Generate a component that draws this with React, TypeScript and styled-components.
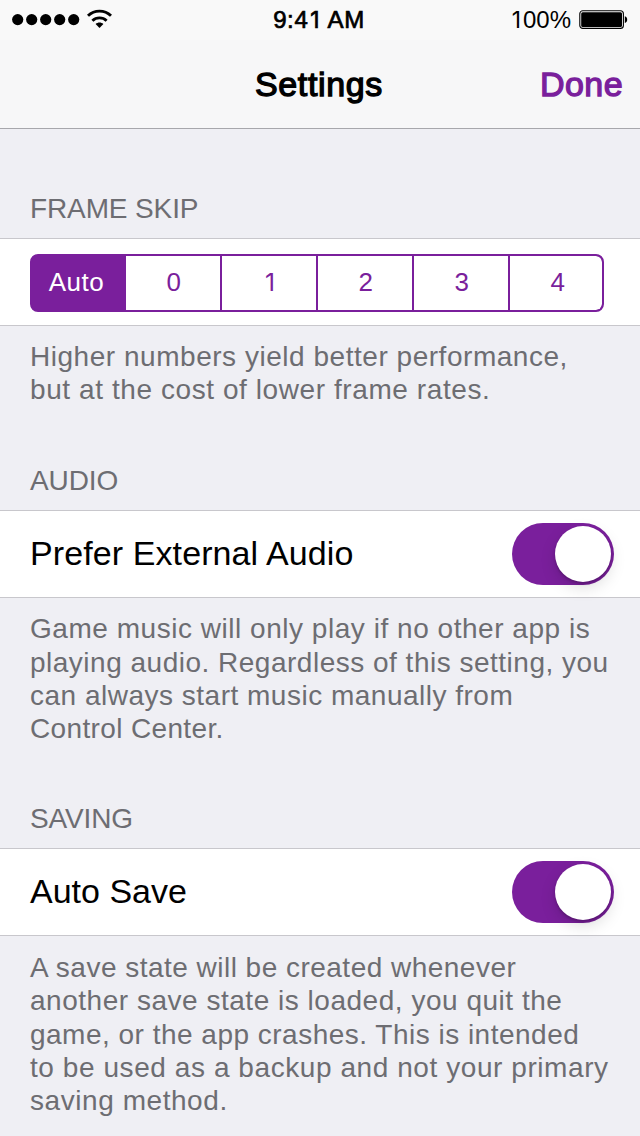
import React, { useState } from 'react';
import styled, { createGlobalStyle } from 'styled-components';

const purple = '#7a1f9c';

const GlobalStyle = createGlobalStyle`
  * { box-sizing: border-box; }
  body {
    margin: 0;
    background: #efeff4;
    font-family: "Liberation Sans", Arial, sans-serif;
    color: #000;
  }
`;

const Screen = styled.div`
  width: 640px;
  height: 1136px;
  overflow: hidden;
  background: #efeff4;
  display: flex;
  flex-direction: column;
`;

const StatusBar = styled.div`
  height: 40px;
  flex: none;
  background: #f9f9f9;
  display: grid;
  grid-template-columns: 1fr auto 1fr;
  align-items: center;
  padding: 0 12px;
  font-size: 24px;
  line-height: 40px;
`;

const Signal = styled.div`
  display: flex;
  align-items: center;
`;

const Clock = styled.div`
  padding-right: 2px;
  letter-spacing: 0.6px;
  -webkit-text-stroke: 0.7px #000;
`;

const Battery = styled.div`
  display: flex;
  align-items: center;
  justify-content: flex-end;
  gap: 8px;
`;

const One = styled.span`
  display: inline-block;
  width: 0.585em;
  text-align: center;
  font-family: Inter, sans-serif;
  font-size: 0.95em;
  line-height: 1;
  letter-spacing: 0;
`;

const NavBar = styled.header`
  height: 89px;
  flex: none;
  background: #f7f7f8;
  border-bottom: 1px solid #a7a7ac;
  display: grid;
  grid-template-columns: 1fr auto 1fr;
  align-items: center;
  padding: 0 17px 0 16px;
  font-size: 34px;
`;

const Title = styled.h1`
  grid-column: 2;
  margin: 0;
  padding-right: 1px;
  font-size: 34px;
  font-weight: 400;
  letter-spacing: 0.65px;
  -webkit-text-stroke: 1.3px #000;
`;

const DoneButton = styled.button`
  justify-self: end;
  padding: 0;
  border: 0;
  background: none;
  font: inherit;
  letter-spacing: 0.4px;
  color: ${purple};
  -webkit-text-stroke: 1.3px ${purple};
`;

const Section = styled.section<{ $height: number }>`
  height: ${(p) => p.$height}px;
  flex: none;
  display: flex;
  flex-direction: column;
`;

const SectionTitle = styled.h2`
  height: 109px;
  flex: none;
  margin: 0;
  padding: 0 30px 13px;
  display: flex;
  align-items: flex-end;
  font-size: 28px;
  line-height: 32px;
  font-weight: 400;
  letter-spacing: -0.12px;
  color: #6d6d72;
`;

const Row = styled.div`
  height: 88px;
  flex: none;
  background: #fff;
  border: solid #c8c7cc;
  border-width: 1px 0;
  padding: 0 26px 0 30px;
  display: flex;
  align-items: center;
  justify-content: space-between;
`;

const RowLabel = styled.span<{ $tracking: number }>`
  padding-bottom: 2px;
  font-size: 34px;
  letter-spacing: ${(p) => p.$tracking}px;
`;

const Footer = styled.p<{ $top?: number }>`
  margin: 0;
  padding: ${(p) => p.$top ?? 14}px 0 0 30px;
  font-size: 28px;
  line-height: 33px;
  color: #6d6d72;
`;

const Line = styled.span<{ $tracking: number; $gap?: number }>`
  display: block;
  white-space: nowrap;
  padding-top: ${(p) => p.$gap ?? 0}px;
  letter-spacing: ${(p) => p.$tracking}px;
`;

const Segments = styled.div`
  width: 574px;
  height: 58px;
  margin-top: 2px;
  display: flex;
  border: 2px solid ${purple};
  border-radius: 8px;
  background: ${purple};
  overflow: hidden;
`;

const Segment = styled.button<{ $active: boolean }>`
  width: 96px;
  flex: none;
  padding: 0 0 2px 2px;
  border: 0;
  border-right: 2px solid ${purple};
  background: ${(p) => (p.$active ? purple : '#fff')};
  color: ${(p) => (p.$active ? '#fff' : purple)};
  font: 26px "Liberation Sans", Arial, sans-serif;
  letter-spacing: 0.5px;
  &:first-child { width: 94px; padding: 0 3px 2px 0; }
  &:last-child {
    width: 92px;
    border-right: 0;
    padding-left: 4px;
    border-radius: 0 6px 6px 0;
  }
`;

const Track = styled.button<{ $on: boolean }>`
  width: 102px;
  height: 62px;
  flex: none;
  border: 0;
  border-radius: 31px;
  padding: 3px;
  display: flex;
  justify-content: ${(p) => (p.$on ? 'flex-end' : 'flex-start')};
  background: ${(p) => (p.$on ? purple : '#e5e5e5')};
`;

const Knob = styled.span`
  width: 56px;
  height: 56px;
  border-radius: 50%;
  background: #fff;
  box-shadow: 0 6px 16px rgba(0, 0, 0, 0.13), 0 2px 3px rgba(0, 0, 0, 0.2);
`;

function Switch({ label }: { label: string }) {
  const [on, setOn] = useState(true);
  return (
    <Track $on={on} role="switch" aria-checked={on} aria-label={label} onClick={() => setOn(!on)}>
      <Knob />
    </Track>
  );
}

const options = ['Auto', '0', '1', '2', '3', '4'];

export default function App() {
  const [skip, setSkip] = useState('Auto');
  return (
    <Screen>
      <GlobalStyle />
      <StatusBar>
        <Signal>
          <svg width="102" height="40" viewBox="12 0 102 40">
            {[17.7, 31.7, 45.7, 59.7, 73.7].map((x) => (
              <circle key={x} cx={x} cy="19.6" r="5.6" />
            ))}
            <g fill="none" stroke="#000" strokeWidth="2.9">
              <path d="M88 15.8C94.5 9.6 104.5 9.6 111 15.8" />
              <path d="M92.4 20.7C96.4 16.9 102.6 16.9 106.6 20.7" />
            </g>
            <path d="M95.6 24.1C97.8 22.1 101.2 22.1 103.4 24.1L99.5 28Z" />
          </svg>
        </Signal>
        <Clock>9:4<One>1</One> AM</Clock>
        <Battery>
          <span><One>1</One>00%</span>
          <svg width="49" height="20" viewBox="0 0 49 20">
            <rect x="0.8" y="0.8" width="43.6" height="17.6" rx="3" fill="none" stroke="#000" strokeWidth="1.1" />
            <rect x="2.2" y="2.2" width="40.8" height="14.8" rx="1.5" />
            <path d="M45.8 6.2C49 7 49 12.2 45.8 13Z" />
          </svg>
        </Battery>
      </StatusBar>
      <NavBar>
        <Title>Settings</Title>
        <DoneButton>Done</DoneButton>
      </NavBar>
      <Section $height={272}>
        <SectionTitle>FRAME SKIP</SectionTitle>
        <Row>
          <Segments>
            {options.map((o) => (
              <Segment key={o} $active={o === skip} onClick={() => setSkip(o)}>
                {o === '1' ? <One>1</One> : o}
              </Segment>
            ))}
          </Segments>
        </Row>
        <Footer>
          <Line $tracking={0.53}>Higher numbers yield better performance,</Line>
          <Line $tracking={0.58}>but at the cost of lower frame rates.</Line>
        </Footer>
      </Section>
      <Section $height={338}>
        <SectionTitle>AUDIO</SectionTitle>
        <Row>
          <RowLabel $tracking={0.1}>Prefer External Audio</RowLabel>
          <Switch label="Prefer External Audio" />
        </Row>
        <Footer>
          <Line $tracking={0.53}>Game music will only play if no other app is</Line>
          <Line $tracking={0.5} $gap={1}>playing audio. Regardless of this setting, you</Line>
          <Line $tracking={0.5}>can always start music manually from</Line>
          <Line $tracking={0.36}>Control Center.</Line>
        </Footer>
      </Section>
      <Section $height={397}>
        <SectionTitle>SAVING</SectionTitle>
        <Row>
          <RowLabel $tracking={0}>Auto Save</RowLabel>
          <Switch label="Auto Save" />
        </Row>
        <Footer $top={15}>
          <Line $tracking={0.48}>A save state will be created whenever</Line>
          <Line $tracking={0.52}>another save state is loaded, you quit the</Line>
          <Line $tracking={0.49} $gap={1}>game, or the app crashes. This is intended</Line>
          <Line $tracking={0.57}>to be used as a backup and not your primary</Line>
          <Line $tracking={0.56}>saving method.</Line>
        </Footer>
      </Section>
    </Screen>
  );
}
